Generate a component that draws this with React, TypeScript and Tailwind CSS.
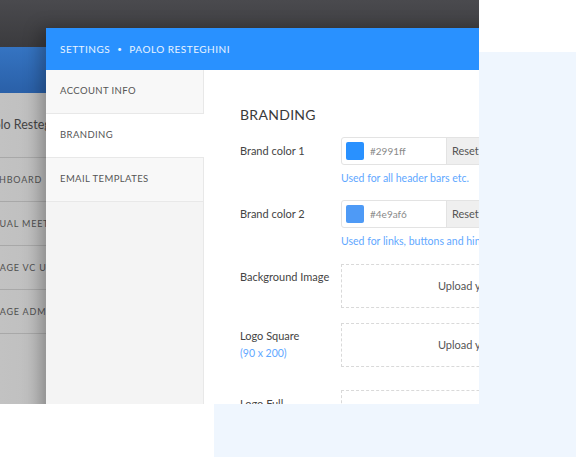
import React from 'react';

const bgNav = [
  { label: 'DASHBOARD', shift: -21 },
  { label: 'VIRTUAL MEETINGS', shift: -23 },
  { label: 'MANAGE VC USERS', shift: -24 },
  { label: 'MANAGE ADMINS', shift: -24 },
];

const ColorField: React.FC<{ color: string; value: string; hint: string }> = ({ color, value, hint }) => (
  <div className="flex flex-col">
    <div className="flex h-[28px] w-[200px] rounded-[3px] border border-[#e3e3e3] overflow-hidden">
      <div className="flex items-center flex-1 pl-[4px] gap-[6px]">
        <div className="w-[18px] h-[18px] rounded-[2px]" style={{ backgroundColor: color }} />
        <span className="text-[10px] text-[#8a8a8a]">{value}</span>
      </div>
      <div className="w-[94px] bg-[#efefef] border-l border-[#e3e3e3] flex items-center pl-[5px] text-[11px] text-[#555]">
        Reset
      </div>
    </div>
    <p className="mt-[6px] text-[10.5px] leading-[14px] text-[#5fa8ff] whitespace-nowrap">{hint}</p>
  </div>
);

const UploadBox: React.FC = () => (
  <div className="h-[44px] w-[284px] border border-dashed border-[#d9d9d9] flex items-center justify-center text-[11px] text-[#555]">
    Upload your image
  </div>
);

const App: React.FC = () => {
  return (
    <div className="relative w-[576px] h-[457px] bg-white overflow-hidden font-['Lato',sans-serif]">
      {/* decorative panel */}
      <div className="absolute left-[214px] top-[52px] w-[362px] h-[405px] bg-[#eff6fe]" />

      {/* app screenshot */}
      <div className="absolute left-0 top-0 w-[479px] h-[404px] overflow-hidden">
        {/* dimmed background app */}
        <div className="flex flex-col h-full">
          <div className="h-[47px] bg-gradient-to-b from-[#4a4a4e] to-[#3b3b3e]" />
          <div className="h-[46px] bg-gradient-to-b from-[#3574c2] to-[#2a60a8]" />
          <div className="flex-1 bg-gradient-to-r from-[#c2c2c2] to-[#a0a0a0]">
            <div className="h-[65px] flex items-center border-b border-[#a8a8a8] -ml-[20px] text-[12.5px] text-[#444] whitespace-nowrap">
              Paolo Resteghini
            </div>
            {bgNav.map((n) => (
              <div
                key={n.label}
                className="h-[44px] flex items-center border-b border-[#a8a8a8] text-[9px] tracking-[0.8px] text-[#505050] whitespace-nowrap"
                style={{ marginLeft: n.shift }}
              >
                {n.label}
              </div>
            ))}
          </div>
        </div>

        {/* settings modal */}
        <div className="absolute left-[46px] top-[28px] w-[620px] h-[460px] bg-white flex flex-col shadow-[-6px_0_16px_rgba(0,0,0,0.28)]">
          <div className="h-[42px] shrink-0 bg-[#2991ff] flex items-center pl-[14px] text-[10px] tracking-[0.5px] text-white/90 whitespace-nowrap">
            <span>SETTINGS</span>
            <span className="mx-[7px] text-[8px]">•</span>
            <span>PAOLO RESTEGHINI</span>
          </div>
          <div className="flex flex-1">
            <div className="w-[158px] shrink-0 flex flex-col bg-[#f4f4f4]">
              <div className="h-[44px] flex items-center pl-[14px] bg-[#f8f8f8] border-b border-r border-[#e8e8e8] text-[9.5px] tracking-[0.4px] text-[#555]">
                ACCOUNT INFO
              </div>
              <div className="h-[44px] flex items-center pl-[14px] bg-white border-b border-[#e8e8e8] text-[9.5px] tracking-[0.4px] text-[#555]">
                BRANDING
              </div>
              <div className="h-[44px] flex items-center pl-[14px] bg-[#f8f8f8] border-b border-r border-[#e8e8e8] text-[9.5px] tracking-[0.4px] text-[#555]">
                EMAIL TEMPLATES
              </div>
              <div className="flex-1 border-r border-[#e8e8e8]" />
            </div>

            <div className="flex-1 pl-[36px] pt-[35px]">
              <h2 className="text-[14px] leading-[20px] tracking-[0.3px] text-[#3a3a3a]">BRANDING</h2>

              <div className="mt-[12px] flex">
                <div className="w-[101px] h-[28px] flex items-center text-[11px] text-[#444]">Brand color 1</div>
                <ColorField color="#2991ff" value="#2991ff" hint="Used for all header bars etc." />
              </div>

              <div className="mt-[15px] flex">
                <div className="w-[101px] h-[28px] flex items-center text-[11px] text-[#444]">Brand color 2</div>
                <ColorField color="#4e9af6" value="#4e9af6" hint="Used for links, buttons and hints" />
              </div>

              <div className="mt-[16px] flex">
                <div className="w-[101px] pt-[6px] text-[11px] leading-[14px] text-[#444]">Background Image</div>
                <UploadBox />
              </div>

              <div className="mt-[15px] flex">
                <div className="w-[101px] pt-[6px] text-[11px] leading-[14px] text-[#444]">
                  Logo Square
                  <div className="mt-[3px] text-[10.5px] text-[#5fa8ff]">(90 x 200)</div>
                </div>
                <UploadBox />
              </div>

              <div className="mt-[23px] flex">
                <div className="w-[101px] pt-[7px] text-[11px] leading-[14px] text-[#444]">Logo Full</div>
                <UploadBox />
              </div>
            </div>
          </div>
        </div>
      </div>
    </div>
  );
};

export default App;
